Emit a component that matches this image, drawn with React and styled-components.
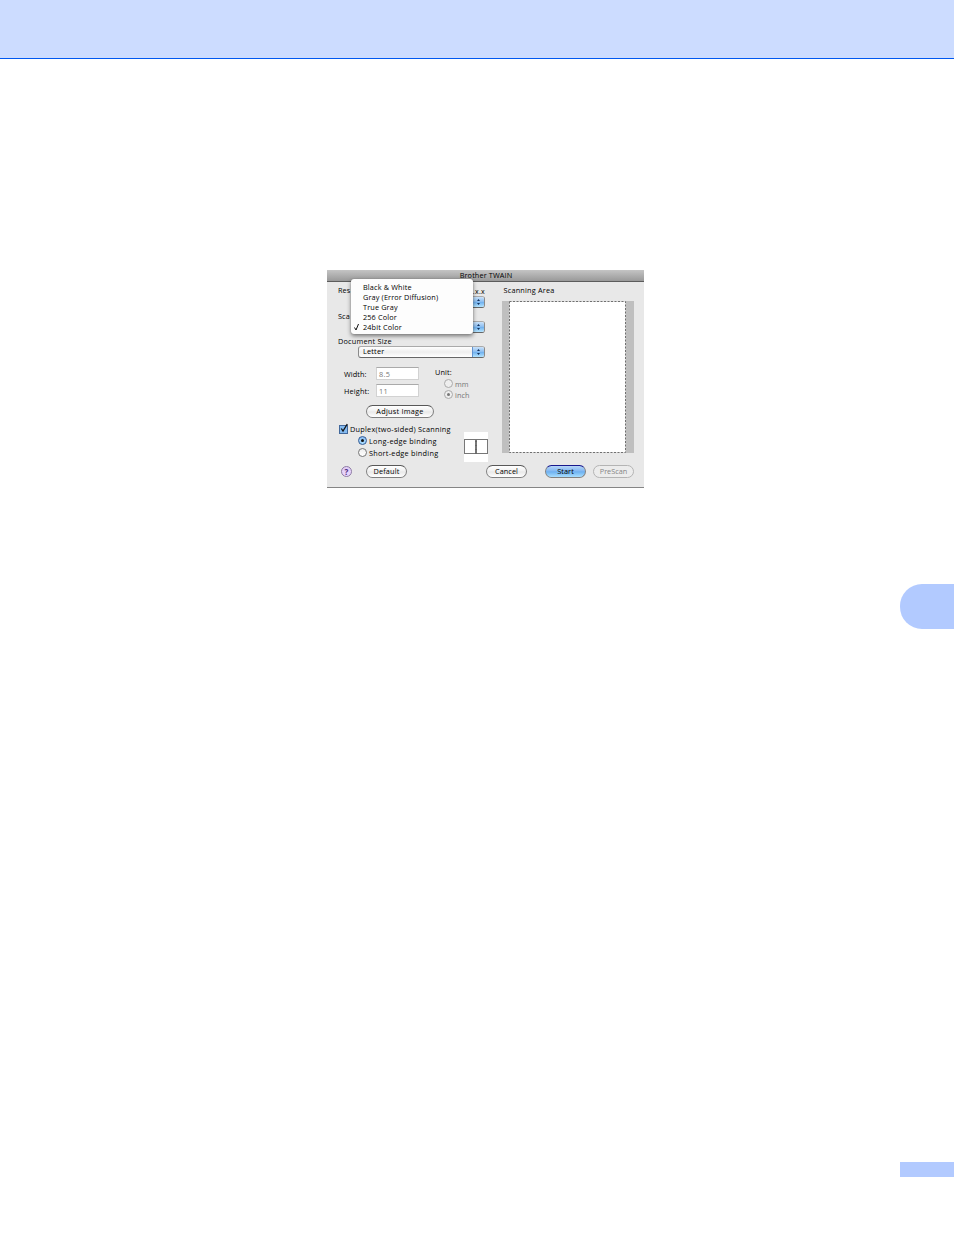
import React, { useState } from 'react';
import styled, { createGlobalStyle } from 'styled-components';

const GlobalStyle = createGlobalStyle`
    body {
        margin: 0;
        background: #fff;
    }
    * {
        box-sizing: border-box;
    }
`;

const Page = styled.div`
    display: flex;
    flex-direction: column;
    width: 954px;
    height: 1235px;
    background: #fff;
    overflow: hidden;
`;

const PageHeader = styled.div`
    flex: none;
    height: 59px;
    background: #ccdcff;
    border-bottom: 1px solid #0058f0;
`;

const ChapterTab = styled.div`
    flex: none;
    align-self: flex-end;
    width: 54px;
    height: 45px;
    margin-top: 96px;
    border-radius: 22px 0 0 22px;
    background: #b2caff;
`;

const PageNumber = styled.div`
    flex: none;
    align-self: flex-end;
    width: 54px;
    height: 15px;
    margin-top: 533px;
    background: #b2caff;
`;

const Dialog = styled.div`
    position: relative;
    flex: none;
    display: flex;
    flex-direction: column;
    width: 317px;
    height: 218px;
    margin: 211px 0 0 327px;
    background: #e8e8e8;
    border-bottom: 1px solid #858585;
    font-family: 'Open Sans', 'Noto Sans', sans-serif;
    font-size: 7.3px;
    font-weight: 500;
    color: #000;
`;

const TitleBar = styled.div`
    height: 12px;
    line-height: 11px;
    padding-left: 1px;
    text-align: center;
    background: linear-gradient(#c4c4c4, #999);
    border-bottom: 1px solid #5c5c5c;
`;

const Text = styled.span`
    display: block;
    white-space: nowrap;
    line-height: 10px;
    letter-spacing: ${(props) => props.$track || 0}px;
    color: ${(props) => (props.$dim ? '#757575' : 'inherit')};
`;

const Body = styled.div`
    display: flex;
    height: 179px;
    padding-left: 11px;
`;

const Settings = styled.div`
    width: 153px;
    padding-top: 3px;
`;

const LabelRow = styled.div`
    display: flex;
    justify-content: space-between;
    height: 10px;
    width: 147px;
    padding-top: ${(props) => props.$drop || 0}px;
    margin-top: ${(props) => props.$top || 0}px;
`;

const Version = styled(Text)`
    padding-top: 2px;
    font-size: 7px;
`;

const SelectBox = styled.div`
    display: flex;
    justify-content: space-between;
    width: 127px;
    height: 12px;
    margin: 1px 0 0 20px;
    padding-left: 4px;
    border: 1px solid #8a8a8a;
    border-top-color: #aaa;
    border-bottom-color: #666;
    border-radius: 3px;
    background: linear-gradient(#fff, #eee 50%, #fff);
    overflow: hidden;

    ${Text} {
        line-height: 8px;
    }
`;

const Stepper = styled.div`
    width: 12px;
    height: 10px;
    background: linear-gradient(#c9e2fa, #8bbdf0 48%, #6fb0ee 52%, #b5e5ff);
    border-left: 1px solid #6293cf;
    svg {
        display: block;
    }
`;

const SizeRow = styled.div`
    display: flex;
    height: 38px;
    margin-top: 9px;
    padding-left: 6px;
`;

const Fields = styled.div`
    display: grid;
    grid-template-columns: 32px 43px;
    grid-auto-rows: 13px;
    row-gap: 4px;
    align-items: center;
`;

const Field = styled.div`
    height: 13px;
    padding-left: 2px;
    line-height: 13px;
    letter-spacing: 0.3px;
    color: #777;
    background: #fff;
    border: 1px solid #d2d2d2;
    border-top-color: #aaa;
`;

const Units = styled.div`
    margin-left: 16px;
`;

const Option = styled.div`
    display: flex;
    align-items: center;
    gap: 2px;
    height: 11px;
    margin-left: ${(props) => props.$indent || 0}px;
    margin-top: ${(props) => props.$top || 0}px;
`;

const Radio = styled.div`
    flex: none;
    display: flex;
    align-items: center;
    justify-content: center;
    width: 9px;
    height: 9px;
    border-radius: 50%;
    border: 1px solid ${(props) => (props.$dim ? '#aaa' : props.$on ? '#315a94' : '#777')};
    background: ${(props) =>
        props.$on && !props.$dim
            ? 'linear-gradient(#8dbcf2, #a9ddff)'
            : props.$dim
            ? '#eee'
            : 'linear-gradient(#eee, #fff)'};

    &::after {
        content: '';
        width: 3px;
        height: 3px;
        border-radius: 50%;
        background: ${(props) => (!props.$on ? 'transparent' : props.$dim ? '#777' : '#111')};
    }
`;

const Button = styled.button`
    flex: none;
    width: ${(props) => props.$width}px;
    height: 13px;
    padding: 0 0 1px;
    font-family: inherit;
    font-size: 7.3px;
    font-weight: 500;
    line-height: 9px;
    letter-spacing: ${(props) => props.$track || 0}px;
    text-align: center;
    color: ${(props) => (props.disabled ? '#858585' : '#000')};
    border: 1px solid ${(props) => (props.disabled ? '#b4b4b4' : '#808080')};
    border-top-color: ${(props) => (props.$primary ? '#18188c' : props.disabled ? '#b4b4b4' : '#585858')};
    border-radius: 7px;
    background: ${(props) =>
        props.$primary
            ? 'linear-gradient(#b6d5f8, #7fb6f2 48%, #6cb0f0 52%, #a9dfff)'
            : props.disabled
            ? '#ececec'
            : 'linear-gradient(#fff, #f0f0f0 48%, #e8e8e8 52%, #fff)'};
`;

const AdjustButton = styled(Button)`
    display: block;
    margin: 0 0 0 28px;
`;

const DuplexRow = styled.div`
    display: flex;
    height: 36px;
    margin-top: 5px;
`;

const DuplexOptions = styled.div`
    width: 126px;
`;

const CheckBox = styled.svg`
    flex: none;
    display: block;
    margin: -1px -1px 0 0;
`;

const BindingPreview = styled.svg`
    flex: none;
    display: block;
    margin-top: 9px;
`;

const Preview = styled.div`
    width: 132px;
    margin-left: 11px;
    padding-top: 3px;

    > ${Text} {
        padding-left: 1.5px;
    }
`;

const ScanBed = styled.div`
    width: 132px;
    height: 152px;
    margin-top: 6px;
    padding: 0 8px 0 7px;
    background: #bfbfbf;
    svg {
        display: block;
    }
`;

const Footer = styled.div`
    display: flex;
    align-items: center;
    height: 13px;
    margin-top: 4px;
    padding-left: 14px;
`;

const HelpButton = styled.button`
    width: 11px;
    height: 11px;
    padding: 0;
    font-family: inherit;
    font-size: 8px;
    font-weight: 700;
    line-height: 8px;
    color: #4d2c7c;
    border: 1px solid #8e7aa5;
    border-radius: 50%;
    background: linear-gradient(#e0cdf5, #ead8ff);
`;

const Spacer = styled.div`
    width: ${(props) => props.$width}px;
`;

// opened list, lies over the two upper selects
const Menu = styled.div`
    position: absolute;
    left: 24px;
    top: 9px;
    width: 122px;
    height: 55px;
    padding: 3px 0 0 1px;
    background: #fdfdfd;
    border-radius: 3px;
    box-shadow: 0 0 1px #777, 0 2px 4px rgba(0, 0, 0, 0.5);
`;

const MenuItem = styled.div`
    display: grid;
    grid-template-columns: 11px auto;
    height: 10.1px;
    line-height: 10px;
`;

const Check = styled.svg`
    margin: 1px 0 0 1px;
`;

const items = ['Black & White', 'Gray (Error Diffusion)', 'True Gray', '256 Color', '24bit Color'];

const Select = ({ value }) => (
    <SelectBox>
        <Text $track={0.2}>{value}</Text>
        <Stepper>
            <svg width='11' height='10' viewBox='0 0 11 10'>
                <path d='M4 4 L5.5 2 L7 4 Z M4 6 L5.5 8 L7 6 Z' fill='#12315c' />
            </svg>
        </Stepper>
    </SelectBox>
);

const App = () => {
    const [selected] = useState('24bit Color');

    return (
        <>
            <GlobalStyle />
            <Page>
                <PageHeader />
                <Dialog>
                    <TitleBar><Text $track={0.12}>Brother TWAIN</Text></TitleBar>
                    <Body>
                        <Settings>
                            <LabelRow>
                                <Text $track={0.1}>Res</Text>
                                <Version $track={0.3}>.x.x</Version>
                            </LabelRow>
                            <Select />
                            <LabelRow $top={2} $drop={1}><Text $track={0.1}>Sca</Text></LabelRow>
                            <Select />
                            <LabelRow $top={2} $drop={1}><Text $track={0.22}>Document Size</Text></LabelRow>
                            <Select value='Letter' />
                            <SizeRow>
                                <Fields>
                                    <Text $track={0.1}>Width:</Text>
                                    <Field>8.5</Field>
                                    <Text $track={0.15}>Height:</Text>
                                    <Field>11</Field>
                                </Fields>
                                <Units>
                                    <Text $track={0.15}>Unit:</Text>
                                    <Option $indent={9} $top={1}><Radio $dim /><Text $dim>mm</Text></Option>
                                    <Option $indent={9}><Radio $dim $on /><Text $dim $track={0.1}>inch</Text></Option>
                                </Units>
                            </SizeRow>
                            <AdjustButton $width={68} $track={0.25}>Adjust Image</AdjustButton>
                            <DuplexRow>
                                <DuplexOptions>
                                    <Option $indent={1}>
                                        <CheckBox width='10' height='11' viewBox='0 0 10 11'>
                                            <rect x='0.5' y='2.5' width='8' height='8' fill='#83baf0' stroke='#42689b' />
                                            <path d='M2.3 5.5 L4 8 L8.3 1' fill='none' stroke='#111' strokeWidth='1.3' />
                                        </CheckBox>
                                        <Text $track={0.25}>Duplex(two-sided) Scanning</Text>
                                    </Option>
                                    <Option $indent={20} $top={1}><Radio $on /><Text $track={0.28}>Long-edge binding</Text></Option>
                                    <Option $indent={20} $top={1}><Radio /><Text $track={0.25}>Short-edge binding</Text></Option>
                                </DuplexOptions>
                                <BindingPreview width='24' height='30' viewBox='0 0 24 30'>
                                    <rect width='24' height='30' fill='#fff' />
                                    <rect x='0.5' y='7.5' width='11' height='14' fill='#fff' stroke='#777' />
                                    <rect x='12.5' y='7.5' width='11' height='14' fill='#fff' stroke='#777' />
                                    <path d='M12 9 V22' stroke='#555' strokeDasharray='1 3' />
                                </BindingPreview>
                            </DuplexRow>
                        </Settings>
                        <Preview>
                            <Text $track={0.2}>Scanning Area</Text>
                            <ScanBed>
                                <svg width='117' height='152' viewBox='0 0 117 152'>
                                    <rect x='0.5' y='0.5' width='116' height='151' fill='#fff' stroke='#707070' strokeDasharray='2 1.5' />
                                </svg>
                            </ScanBed>
                        </Preview>
                    </Body>
                    <Footer>
                        <HelpButton>?</HelpButton>
                        <Spacer $width={14} />
                        <Button $width={41} $track={0.18}>Default</Button>
                        <Spacer $width={79} />
                        <Button $width={41} $track={0.05}>Cancel</Button>
                        <Spacer $width={18} />
                        <Button $width={41} $primary $track={0.1}>Start</Button>
                        <Spacer $width={7} />
                        <Button $width={41} disabled>PreScan</Button>
                    </Footer>
                    <Menu>
                        {items.map((item) => (
                            <MenuItem key={item}>
                                {item === selected ? (
                                    <Check width='8' height='8' viewBox='0 0 8 8'>
                                        <path d='M1.5 4.5 L3 7 L5.5 1' fill='none' stroke='#111' strokeWidth='1' />
                                    </Check>
                                ) : (
                                    <span />
                                )}
                                <Text $track={0.14}>{item}</Text>
                            </MenuItem>
                        ))}
                    </Menu>
                </Dialog>
                <ChapterTab />
                <PageNumber />
            </Page>
        </>
    );
};

export default App;
